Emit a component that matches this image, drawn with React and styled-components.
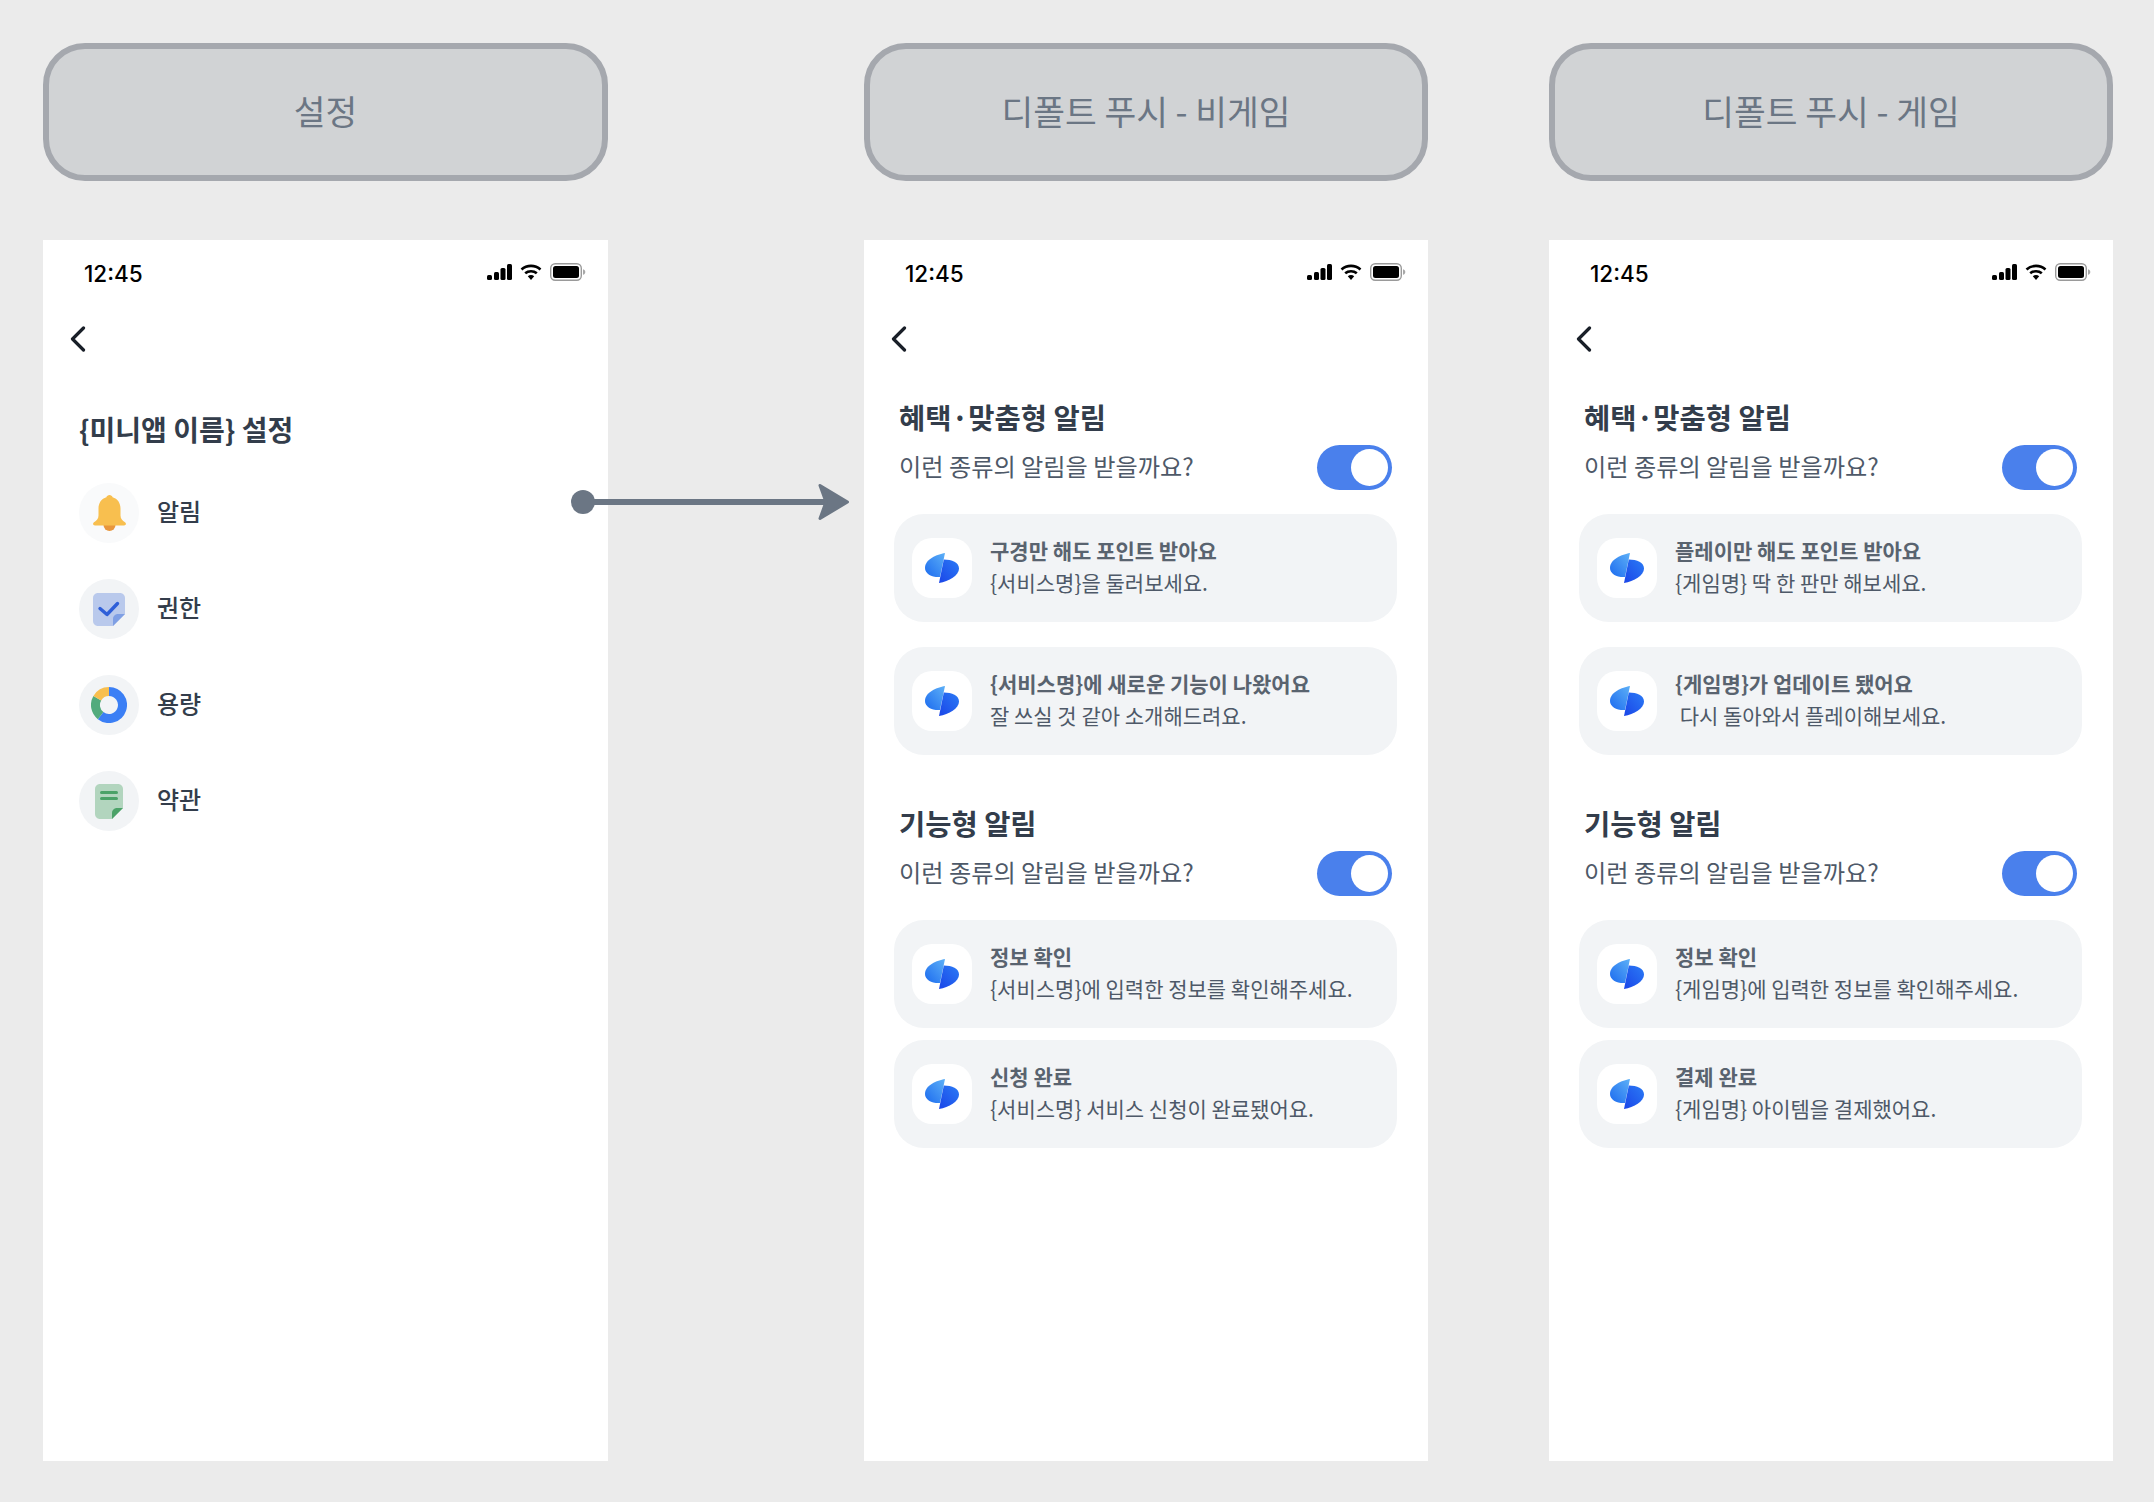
import styled, { createGlobalStyle } from "styled-components"

const GlobalStyle = createGlobalStyle`
    * { box-sizing: border-box; }
    body {
        margin: 0;
        background-color: #EBEBEB;
        font-family: "Noto Sans CJK KR", "Noto Sans", sans-serif;
    }
`

function Logo() {
    return (
        <svg width="34" height="30" viewBox="0 0 34 30">
            <defs>
                <linearGradient id="logoLeft" x1="1" y1="0" x2="0" y2="1">
                    <stop offset="0" stopColor="#5DB0F7" />
                    <stop offset="1" stopColor="#1C6BEF" />
                </linearGradient>
                <linearGradient id="logoRight" x1="1" y1="0" x2="0" y2="1">
                    <stop offset="0" stopColor="#2B7BF5" />
                    <stop offset="1" stopColor="#1A45E8" />
                </linearGradient>
            </defs>
            <path d="M20 0C12 1.5 0 6 0 15C0 21 7 24.5 15 24L20 0Z" fill="url(#logoLeft)" />
            <path d="M14 30C24 28.5 34 22.5 34 15.5C34 9.5 27 6.5 18.8 6.5L14 30Z" fill="url(#logoRight)" />
        </svg>
    )
}

function BackIcon() {
    return (
        <svg width="16" height="26" viewBox="0 0 16 26" fill="none">
            <path d="M13.5 2L2.5 13L13.5 24" stroke="#191F28" strokeWidth="3.2" strokeLinecap="round" strokeLinejoin="round" />
        </svg>
    )
}

function StatusIcons() {
    return (
        <StatusGroup>
            <svg width="25" height="16" viewBox="0 0 25 16" fill="#000">
                <rect x="0" y="11" width="5" height="5" rx="1.5" />
                <rect x="7" y="8" width="5" height="8" rx="1.5" />
                <rect x="13.5" y="4" width="5" height="12" rx="1.5" />
                <rect x="20" y="0" width="5" height="16" rx="1.5" />
            </svg>
            <svg width="22" height="16" viewBox="0 0 22 16" fill="none">
                <path d="M1.5 5.5C6.8 0.7 15.2 0.7 20.5 5.5" stroke="#000" strokeWidth="2.6" />
                <path d="M5.2 9.3C8.4 6.5 13.6 6.5 16.8 9.3" stroke="#000" strokeWidth="2.6" />
                <path d="M7.8 12.2L11 16L14.2 12.2C12.4 10.6 9.6 10.6 7.8 12.2Z" fill="#000" />
            </svg>
            <svg width="36" height="18" viewBox="0 0 36 18" fill="none">
                <rect x="0.7" y="0.7" width="30.6" height="16.6" rx="4.5" stroke="#9A9A9A" strokeWidth="1.4" />
                <rect x="3" y="3" width="26" height="12" rx="2.5" fill="#000" />
                <path d="M33 6.2C34.5 6.6 35.3 7.6 35.3 9C35.3 10.4 34.5 11.4 33 11.8Z" fill="#A8A8A8" />
            </svg>
        </StatusGroup>
    )
}

function BellIcon() {
    return (
        <svg width="33" height="36" viewBox="0 0 33 36">
            <circle cx="16.5" cy="30" r="6" fill="#E8963C" />
            <path d="M16.5 0C18 0 19.2 1 19.6 2.2C24.6 3.6 27.5 8 27.5 13.5V20.5C27.5 24 29.5 25.5 32 27.2C33.6 28.4 33 30.5 31 30.5H2C0 30.5 -0.6 28.4 1 27.2C3.5 25.5 5.5 24 5.5 20.5V13.5C5.5 8 8.4 3.6 13.4 2.2C13.8 1 15 0 16.5 0Z" fill="#F8BF4F" />
        </svg>
    )
}

function CheckIcon() {
    return (
        <svg width="32" height="33" viewBox="0 0 32 33">
            <path d="M5 0H27C29.8 0 32 2.2 32 5V21L20 33H5C2.2 33 0 30.8 0 28V5C0 2.2 2.2 0 5 0Z" fill="#B9C9EC" />
            <path d="M32 21L20 33V26C20 23.2 22.2 21 25 21H32Z" fill="#7F9FE4" />
            <path d="M7 15.5L14 21.5L24.5 10.5" stroke="#2F5FD8" strokeWidth="3.4" strokeLinecap="round" strokeLinejoin="round" fill="none" />
        </svg>
    )
}

function DonutIcon() {
    return (
        <svg width="36" height="36" viewBox="0 0 36 36" fill="none" strokeWidth="9">
            <path d="M18 4.5A13.5 13.5 0 1 1 9.6 28.6" stroke="#3B7FF5" />
            <path d="M9.6 28.6A13.5 13.5 0 0 1 6.3 11.2" stroke="#52AB7D" />
            <path d="M6.3 11.2A13.5 13.5 0 0 1 18 4.5" stroke="#F8BF4F" />
        </svg>
    )
}

function TermsIcon() {
    return (
        <svg width="28" height="35" viewBox="0 0 28 35">
            <path d="M5 0H23C25.8 0 28 2.2 28 5V24L17 35H5C2.2 35 0 32.8 0 30V5C0 2.2 2.2 0 5 0Z" fill="#B2D5BE" />
            <path d="M28 24L17 35V29C17 26.2 19.2 24 22 24H28Z" fill="#4BA268" />
            <rect x="5" y="7" width="18" height="3" rx="1.5" fill="#4BA268" />
            <rect x="5" y="13" width="18" height="3" rx="1.5" fill="#4BA268" />
        </svg>
    )
}

function Connector() {
    return (
        <ArrowLayer width="280" height="44" viewBox="0 0 280 44" fill="none">
            <circle cx="13" cy="22" r="12" fill="#6B7684" />
            <path d="M13 22H268" stroke="#6B7684" strokeWidth="6" />
            <path d="M250 5.5L277.5 22L250 38.5L256 22Z" fill="#6B7684" stroke="#6B7684" strokeWidth="3" strokeLinejoin="round" />
        </ArrowLayer>
    )
}

function StatusBar() {
    return (
        <StatusRow>
            <Clock>12:45</Clock>
            <StatusIcons />
        </StatusRow>
    )
}

function PushCard({ title, text }) {
    return (
        <Card>
            <LogoBox><Logo /></LogoBox>
            <CardText>
                <CardTitle>{title}</CardTitle>
                <CardSub>{text}</CardSub>
            </CardText>
        </Card>
    )
}

function PushSection({ heading, gap, items }) {
    return (
        <Section>
            <SectionTitle>{heading}</SectionTitle>
            <QuestionRow>
                <Question>이런 종류의 알림을 받을까요?</Question>
                <Toggle><Knob /></Toggle>
            </QuestionRow>
            <CardList $gap={gap}>
                {items.map((item) => <PushCard key={item.title} title={item.title} text={item.text} />)}
            </CardList>
        </Section>
    )
}

const settings = [
    { label: "알림", icon: <BellIcon />, tint: "#F9FAFB" },
    { label: "권한", icon: <CheckIcon />, tint: "#F2F4F6" },
    { label: "용량", icon: <DonutIcon />, tint: "#F2F4F6" },
    { label: "약관", icon: <TermsIcon />, tint: "#F2F4F6" },
]

const services = {
    title: "디폴트 푸시 - 비게임",
    offset: 256,
    benefit: [
        { title: "구경만 해도 포인트 받아요", text: "{서비스명}을 둘러보세요." },
        { title: "{서비스명}에 새로운 기능이 나왔어요", text: "잘 쓰실 것 같아 소개해드려요." },
    ],
    feature: [
        { title: "정보 확인", text: "{서비스명}에 입력한 정보를 확인해주세요." },
        { title: "신청 완료", text: "{서비스명} 서비스 신청이 완료됐어요." },
    ],
}

const games = {
    title: "디폴트 푸시 - 게임",
    offset: 121,
    benefit: [
        { title: "플레이만 해도 포인트 받아요", text: "{게임명} 딱 한 판만 해보세요." },
        { title: "{게임명}가 업데이트 됐어요", text: " 다시 돌아와서 플레이해보세요." },
    ],
    feature: [
        { title: "정보 확인", text: "{게임명}에 입력한 정보를 확인해주세요." },
        { title: "결제 완료", text: "{게임명} 아이템을 결제했어요." },
    ],
}

export default function App() {
    return (
        <Board>
            <GlobalStyle />
            <Column $width={565}>
                <Label>설정</Label>
                <Phone>
                    <StatusBar />
                    <BackRow><BackIcon /></BackRow>
                    <PageTitle>{"{미니앱 이름} 설정"}</PageTitle>
                    <SettingList>
                        {settings.map((row) => (
                            <SettingRow key={row.label}>
                                <IconCircle $tint={row.tint}>{row.icon}</IconCircle>
                                <SettingLabel>{row.label}</SettingLabel>
                            </SettingRow>
                        ))}
                    </SettingList>
                    <Connector />
                </Phone>
            </Column>

            {[services, games].map((variant) => (
                <Column key={variant.title} $width={564} $offset={variant.offset}>
                    <Label>{variant.title}</Label>
                    <Phone>
                        <StatusBar />
                        <BackRow><BackIcon /></BackRow>
                        <Sections>
                            <PushSection heading="혜택·맞춤형 알림" gap={25} items={variant.benefit} />
                            <PushSection heading="기능형 알림" gap={12} items={variant.feature} />
                        </Sections>
                    </Phone>
                </Column>
            ))}
        </Board>
    )
}

const Board = styled.div`
    display: flex;
    align-items: flex-start;
    padding: 43px 0 0 43px;
    min-height: 1502px;
`

const Column = styled.div`
    width: ${(props) => props.$width}px;
    flex: none;
    margin-left: ${(props) => props.$offset || 0}px;
`

const Label = styled.div`
    height: 138px;
    margin-bottom: 59px;
    padding-bottom: 4px;
    display: flex;
    align-items: center;
    justify-content: center;
    background-color: #D1D3D5;
    border: 6px solid #A5A8AE;
    border-radius: 42px;
    font-size: 34.5px;
    color: #6B7684;
`

const Phone = styled.div`
    position: relative;
    height: 1221px;
    background-color: #FFFFFF;
`

const StatusRow = styled.div`
    height: 64px;
    padding: 0 22px 0 41px;
    display: flex;
    align-items: center;
    justify-content: space-between;
`

const Clock = styled.span`
    padding-top: 2px;
    font-family: Inter, sans-serif;
    font-size: 22.5px;
    font-weight: 500;
    color: #000000;
`

const StatusGroup = styled.div`
    display: flex;
    align-items: center;
    gap: 8px;
`

const BackRow = styled.div`
    height: 71px;
    padding: 0 0 2px 27px;
    display: flex;
    align-items: center;
`

const PageTitle = styled.h1`
    margin: 29px 0 0 36px;
    height: 50px;
    line-height: 50px;
    font-size: 28px;
    font-weight: 600;
    color: #333D4B;
`

const SettingList = styled.div`
    margin: 29px 0 0 36px;
    display: flex;
    flex-direction: column;
    gap: 36px;
`

const SettingRow = styled.div`
    display: flex;
    align-items: center;
    gap: 18px;
`

const IconCircle = styled.div`
    width: 60px;
    height: 60px;
    border-radius: 50%;
    background-color: ${(props) => props.$tint};
    display: flex;
    align-items: center;
    justify-content: center;
`

const SettingLabel = styled.span`
    padding-bottom: 5px;
    font-size: 24px;
    font-weight: 500;
    color: #333D4B;
`

const ArrowLayer = styled.svg`
    position: absolute;
    left: 527px;
    top: 240px;
    overflow: visible;
`

const Sections = styled.div`
    padding: 25px 31px 0 30px;
    display: flex;
    flex-direction: column;
    gap: 51px;
`

const Section = styled.section`
    display: flex;
    flex-direction: column;
`

const SectionTitle = styled.h2`
    margin: 0 0 9px 5px;
    height: 36px;
    line-height: 33px;
    font-size: 28.5px;
    font-weight: 600;
    color: #333D4B;
`

const QuestionRow = styled.div`
    height: 45px;
    margin-bottom: 24px;
    padding: 0 5px;
    display: flex;
    align-items: center;
    justify-content: space-between;
`

const Question = styled.span`
    padding-bottom: 5px;
    font-size: 24.2px;
    color: #4E5968;
`

const Toggle = styled.div`
    width: 75px;
    height: 45px;
    border-radius: 23px;
    padding-right: 4px;
    background-color: #4A80EC;
    display: flex;
    align-items: center;
    justify-content: flex-end;
`

const Knob = styled.div`
    width: 37px;
    height: 37px;
    border-radius: 50%;
    background-color: #FFFFFF;
`

const CardList = styled.div`
    display: flex;
    flex-direction: column;
    gap: ${(props) => props.$gap}px;
`

const Card = styled.div`
    height: 108px;
    padding-left: 18px;
    border-radius: 30px;
    background-color: #F2F4F6;
    display: flex;
    align-items: center;
    gap: 18px;
`

const LogoBox = styled.div`
    width: 60px;
    height: 60px;
    flex: none;
    border-radius: 20px;
    background-color: #FFFFFF;
    display: flex;
    align-items: center;
    justify-content: center;
`

const CardText = styled.div`
    padding-bottom: 5px;
    display: flex;
    flex-direction: column;
`

const CardTitle = styled.div`
    height: 32px;
    line-height: 32px;
    font-size: 21px;
    font-weight: 600;
    color: #59636F;
`

const CardSub = styled.div`
    height: 32px;
    line-height: 32px;
    font-size: 21px;
    color: #4E5968;
    white-space: pre;
`
